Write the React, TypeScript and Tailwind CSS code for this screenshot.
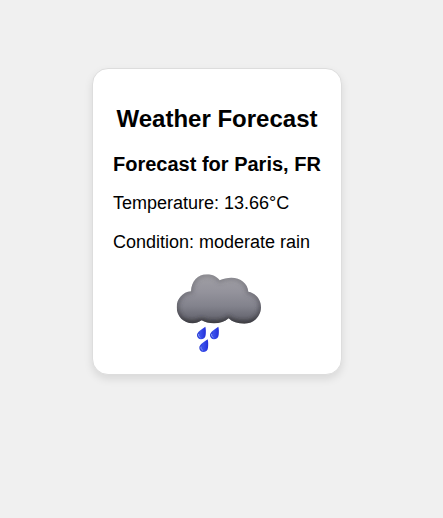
const outline =
  "M78 79C79 50 98 28 126 28C143 28 157 36 164 46C174 41 187 38 199 38C227 38 248 55 250 80C273 85 288 104 288 127C288 154 266 176 238 176C218 176 202 171 191 160C180 170 164 175 147 175C132 175 120 172 110 166C101 172 92 175 83 175C56 175 35 154 35 127C35 102 53 81 78 79Z";

function RainCloud() {
  return (
    <svg className="block h-[95px] w-[110px]" viewBox="0 0 330 285" aria-label="moderate rain">
      <defs>
        <linearGradient id="cloud" x1="0" y1="28" x2="0" y2="176" gradientUnits="userSpaceOnUse">
          <stop offset="0" stopColor="#a09fa4" />
          <stop offset="0.35" stopColor="#94939c" />
          <stop offset="0.65" stopColor="#82828c" />
          <stop offset="0.85" stopColor="#6b6b75" />
          <stop offset="1" stopColor="#4b4a51" />
        </linearGradient>
        <linearGradient id="rim" x1="0" y1="28" x2="0" y2="176" gradientUnits="userSpaceOnUse">
          <stop offset="0" stopColor="#55545b" stopOpacity="0.35" />
          <stop offset="0.5" stopColor="#45444b" stopOpacity="0.5" />
          <stop offset="1" stopColor="#2f2e33" stopOpacity="0.8" />
        </linearGradient>
        <linearGradient id="drop" x1="0" y1="0" x2="1" y2="0">
          <stop offset="0" stopColor="#2639cf" />
          <stop offset="0.4" stopColor="#3a50ec" />
          <stop offset="1" stopColor="#2430d8" />
        </linearGradient>
        <filter id="soft" x="-10%" y="-10%" width="120%" height="120%">
          <feGaussianBlur stdDeviation="6" />
        </filter>
        <clipPath id="shape">
          <path d={outline} />
        </clipPath>
      </defs>
      <g clipPath="url(#shape)">
        <rect x="25" y="15" width="275" height="170" fill="url(#cloud)" />
        <path d={outline} fill="none" stroke="url(#rim)" strokeWidth="13" filter="url(#soft)" />
      </g>
      {[
        [95, 185],
        [134, 185],
        [102, 223],
      ].map(([x, y]) => (
        <g key={`${x}-${y}`} transform={`translate(${x} ${y})`}>
          <path d="M26 0C28 8 28 16 27 25C26 34 20 38 13 38C6 38 1 33 1 26C1 15 15 9 26 0Z" fill="url(#drop)" />
          <path d="M6 23C5 27 7 30 10 32" fill="none" stroke="#8fa2fb" strokeWidth="3" strokeLinecap="round" />
        </g>
      ))}
    </svg>
  );
}

export default function App() {
  return (
    <main className="flex h-[518px] items-start bg-[#f0f0f0] pt-[68px] pl-[92px] font-['Liberation_Sans',Arial,sans-serif] text-black">
      <section className="flex h-[307px] w-[250px] flex-col rounded-[16px] border border-[#dddddd] bg-white px-5 pt-[36px] shadow-[0_4px_8px_rgba(0,0,0,0.1)]">
        <h1 className="text-center text-[24px] leading-[28px] font-bold whitespace-nowrap">Weather Forecast</h1>
        <h2 className="mt-[20px] text-[20px] leading-[23px] font-bold whitespace-nowrap">Forecast for Paris, FR</h2>
        <p className="mt-[17px] text-[18px] leading-[21px] whitespace-nowrap">Temperature: 13.66°C</p>
        <p className="mt-[18px] text-[18px] leading-[21px] whitespace-nowrap">Condition: moderate rain</p>
        <div className="mt-[12px] flex pl-[52px]">
          <RainCloud />
        </div>
      </section>
    </main>
  );
}
